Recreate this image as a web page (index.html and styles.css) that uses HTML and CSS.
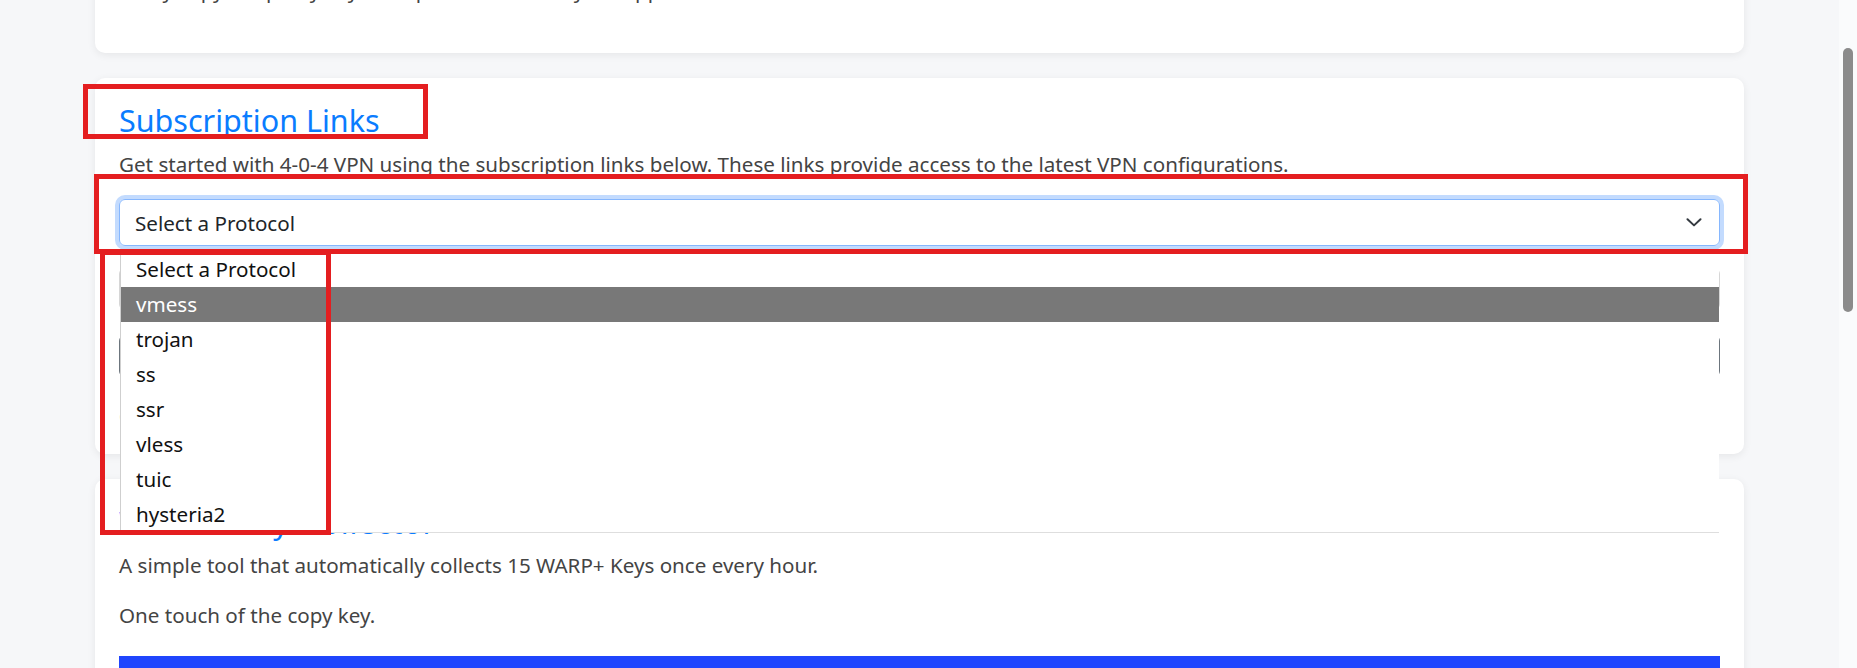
FILE: index.html
```html
<!DOCTYPE html>
<html lang="en">
<head>
<meta charset="utf-8">
<title>4-0-4 VPN</title>
<link rel="stylesheet" href="styles.css">
</head>
<body>
<div class="screen">
  <div class="viewport">
    <main class="container">
      <section class="card card-top">
        <p class="text">Easily copy the proxy keys and paste them into your app.</p>
      </section>

      <section class="card card-sub">
        <h2 class="card-title">Subscription Links</h2>
        <p class="text lead">Get started with 4-0-4 VPN using the subscription links below. These links provide access to the latest VPN configurations.</p>
        <div class="select-wrap">
          <div class="select">
            <span>Select a Protocol</span>
            <svg class="chevron" width="16" height="9" viewBox="0 0 16 9"><path d="M1.5 1.2 8 7.4 14.5 1.2" fill="none" stroke="#343a40" stroke-width="2" stroke-linecap="round" stroke-linejoin="round"/></svg>
          </div>
          <ul class="popup">
            <li>Select a Protocol</li>
            <li class="active">vmess</li>
            <li>trojan</li>
            <li>ss</li>
            <li>ssr</li>
            <li>vless</li>
            <li>tuic</li>
            <li>hysteria2</li>
          </ul>
        </div>
        <div class="field"></div>
        <div class="field field-dark"></div>
        <p class="text note">Copy the link and import it into your client.</p>
      </section>

      <section class="card card-warp">
        <h2 class="card-title">WARP+ Key Collector</h2>
        <p class="text">A simple tool that automatically collects 15 WARP+ Keys once every hour.</p>
        <p class="text last">One touch of the copy key.</p>
        <div class="bar"></div>
      </section>
    </main>

    <div class="mark mark-title"></div>
    <div class="mark mark-select"></div>
    <div class="mark mark-list"></div>
  </div>
  <div class="scrollbar"><div class="thumb"></div></div>
</div>
</body>
</html>
```

FILE: styles.css
```css
* { box-sizing: border-box; }

html, body {
  margin: 0;
  padding: 0;
  background: #f6f7f9;
  font-family: "Noto Sans", "Open Sans", sans-serif;
  color: #444;
}

.screen {
  display: flex;
  height: 668px;
  overflow: hidden;
}

.viewport {
  flex: 1;
  position: relative;
  overflow: hidden;
}

.container {
  width: 1649px;
  margin: 0 auto;
  display: flex;
  flex-direction: column;
  gap: 25px;
}

.card {
  background: #fff;
  border-radius: 10px;
  box-shadow: 0 2px 8px rgba(0, 0, 0, 0.07);
  padding: 23px 24px 24px;
}

.card-top {
  margin-top: -47px;
  padding-bottom: 27px;
}

.card-title {
  margin: 0 0 11px;
  font-size: 30.5px;
  line-height: 38px;
  font-weight: 400;
  color: #0a7cff;
}

.card-warp {
  padding-top: 24px;
}

.card-warp .card-title {
  margin-bottom: 10px;
  word-spacing: 3px;
  letter-spacing: 0.8px;
}

.text {
  margin: 0 0 22px;
  font-size: 20.6px;
  line-height: 28px;
  color: #444;
}

.text.last {
  margin-bottom: 0;
}

.lead {
  margin-bottom: 21px;
}

.select-wrap {
  position: relative;
}

.select {
  height: 47px;
  border: 1px solid #86b7fe;
  border-radius: 6px;
  box-shadow: 0 0 0 4px #c3dbfe;
  padding: 0 17px 0 15px;
  display: flex;
  align-items: center;
  justify-content: space-between;
  font-size: 20.6px;
  color: #212529;
}

.chevron {
  display: block;
}

.popup {
  position: absolute;
  left: 1px;
  right: 1px;
  top: calc(100% + 6px);
  margin: 0;
  padding: 0;
  list-style: none;
  background: #fff;
  border-left: 1px solid #cfcfcf;
  border-bottom: 1px solid #dedede;
  z-index: 20;
}

.popup li {
  height: 35px;
  line-height: 35px;
  padding-left: 15px;
  font-size: 20.6px;
  color: #111;
}

.popup li.active {
  background: #787878;
  color: #fff;
}

.field {
  height: 42px;
  margin-top: 22px;
  border: 1px solid #d6d6d6;
  border-radius: 6px;
}

.field-dark {
  margin-top: 25px;
  border-color: #6c757d;
}

.note {
  margin: 25px 0 0;
}

.bar {
  height: 60px;
  margin-top: 27px;
  background: #2045fd;
}

.scrollbar {
  width: 18px;
  background: #fafbfc;
  padding: 48px 4px 0;
}

.thumb {
  width: 10px;
  height: 264px;
  border-radius: 5px;
  background: #8b8b8b;
}

.mark {
  position: absolute;
  border: 5px solid #e41e20;
  pointer-events: none;
  z-index: 30;
}

.mark-title {
  left: 83px;
  top: 84px;
  width: 345px;
  height: 55px;
}

.mark-select {
  left: 94px;
  top: 174px;
  width: 1654px;
  height: 80px;
}

.mark-list {
  left: 100px;
  top: 250px;
  width: 231px;
  height: 285px;
}
```
